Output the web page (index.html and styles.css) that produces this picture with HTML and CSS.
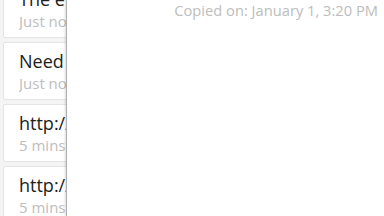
FILE: index.html
```html
<!DOCTYPE html>
<html lang="en">
<head>
    <meta charset="UTF-8">
    <meta name="viewport" content="width=device-width, initial-scale=1.0">
    <title>Clipboard</title>
    <link rel="stylesheet" href="styles.css">
</head>
<body>

    <div class="screen">
        <div class="clip-list">
            <div class="clip-card">
                <div class="clip-title">The event starts at seven</div>
                <div class="clip-time">Just now</div>
            </div>
            <div class="clip-card">
                <div class="clip-title">Need to pick up groceries</div>
                <div class="clip-time">Just now</div>
            </div>
            <div class="clip-card">
                <div class="clip-title">http://www.example.com/article</div>
                <div class="clip-time">5 mins ago</div>
            </div>
            <div class="clip-card">
                <div class="clip-title">http://news.example.org/today</div>
                <div class="clip-time">5 mins ago</div>
            </div>
        </div>

        <div class="detail-panel">
            <div class="copied-on">Copied on: January 1, 3:20 PM</div>
        </div>
    </div>

</body>
</html>
```
FILE: styles.css
```css
body {
    margin: 0;
    padding: 0;
    font-family: "Open Sans", "Noto Sans", sans-serif;
    background-color: #f4f4f4;
    overflow: hidden;
}

.screen {
    position: relative;
    width: 384px;
    height: 216px;
    overflow: hidden;
}

/* list sits behind the sheet, only its left strip shows */
.clip-list {
    width: 120px;
    display: flex;
    flex-direction: column;
    gap: 4px;
    margin-top: -20px;
    padding: 0 3px;
}

.clip-card {
    height: 58px;
    box-sizing: border-box;
    padding: 7px 13px 0 15px;
    background-color: #fff;
    border: 1px solid #e4e4e4;
    border-radius: 2px;
    overflow: hidden;
}

.clip-title {
    font-size: 18px;
    line-height: 22px;
    color: #212121;
    white-space: nowrap;
    overflow: hidden;
}

.clip-time {
    margin-top: 2px;
    font-size: 15px;
    line-height: 18px;
    color: #bdbdbd;
    white-space: nowrap;
    overflow: hidden;
}

/* detail sheet slid over the list */
.detail-panel {
    position: absolute;
    top: 0;
    left: 66px;
    right: 0;
    bottom: 0;
    background-color: #fff;
    border-left: 1px solid #b0b0b0;
    box-shadow: -1px 0 2px rgba(0, 0, 0, 0.15);
    padding: 0 6px 0 0;
}

.copied-on {
    font-family: "Open Sans", sans-serif;
    font-size: 14.7px;
    color: #bdbdbd;
    text-align: right;
}
```
